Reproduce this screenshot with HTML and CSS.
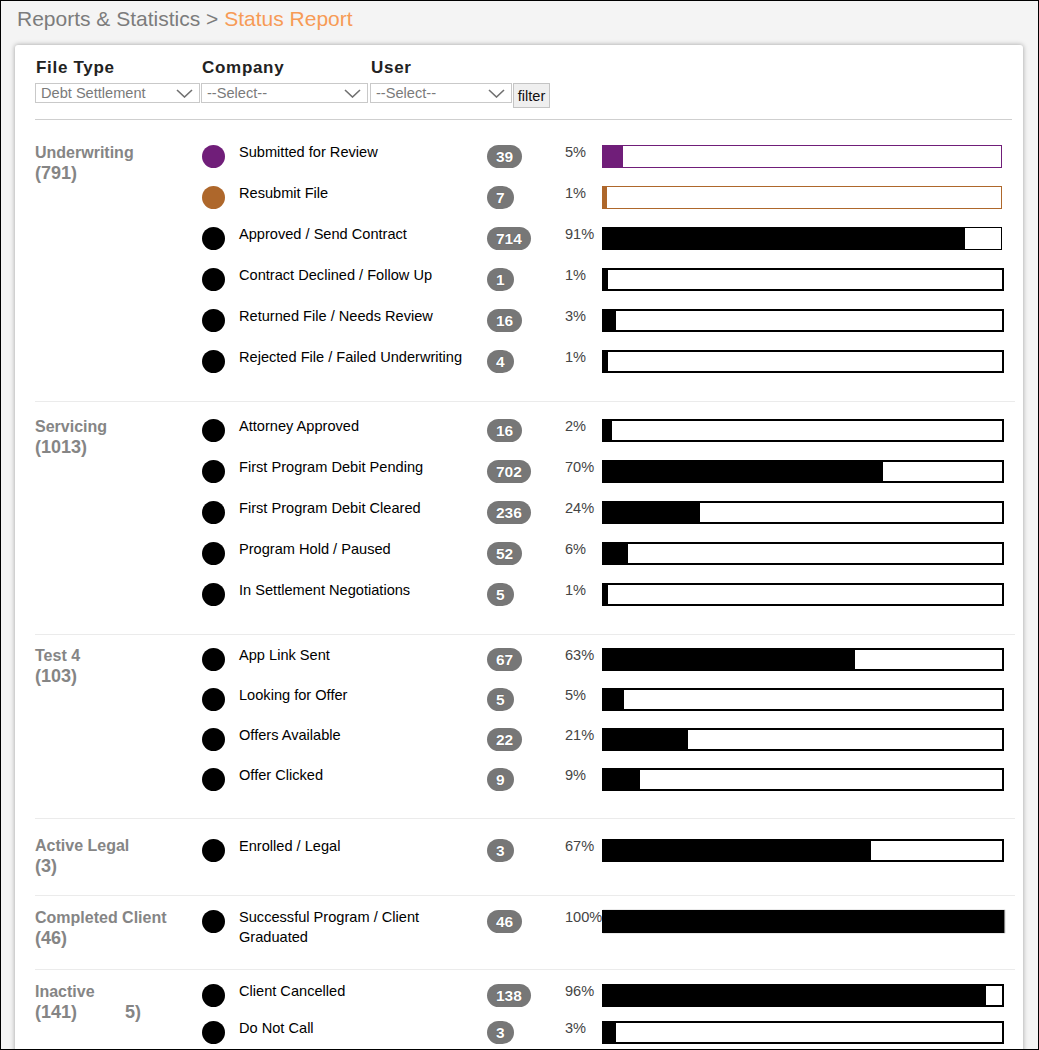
FILE: index.html
```html
<!DOCTYPE html>
<html lang="en">
  <head>
    <meta charset="UTF-8" />
    <title>Status Report</title>
    <link rel="stylesheet" href="styles.css">
  </head>
  <body>
    <div class="crumbs">
      Reports &amp; Statistics &gt; <span class="crumb-current">Status Report</span>
    </div>

    <div class="card">
      <div class="filters">
        <label class="filter-label">File Type</label>
        <label class="filter-label">Company</label>
        <label class="filter-label">User</label>
        <span></span>
        <div class="select">
          <span>Debt Settlement</span>
          <svg class="chevron" width="17" height="9" viewBox="0 0 17 9"><polyline points="1,1 8.5,8 16,1" /></svg>
        </div>
        <div class="select select-company">
          <span>--Select--</span>
          <svg class="chevron" width="17" height="9" viewBox="0 0 17 9"><polyline points="1,1 8.5,8 16,1" /></svg>
        </div>
        <div class="select select-user">
          <span>--Select--</span>
          <svg class="chevron" width="17" height="9" viewBox="0 0 17 9"><polyline points="1,1 8.5,8 16,1" /></svg>
        </div>
        <button class="filter-btn">filter</button>
      </div>

      <!-- Underwriting -->
      <div class="group">
        <div class="group-label">Underwriting<br /><span class="count">(791)</span></div>
        <div class="rows">
          <div class="row">
            <span class="dot dot-purple"></span>
            <span class="row-label">Submitted for Review</span>
            <span class="badge-col"><span class="badge">39</span></span>
            <span class="pct">5%</span>
            <div class="bar bar-purple"><div class="fill" style="width: 5%"></div></div>
          </div>
          <div class="row">
            <span class="dot dot-orange"></span>
            <span class="row-label">Resubmit File</span>
            <span class="badge-col"><span class="badge">7</span></span>
            <span class="pct">1%</span>
            <div class="bar bar-orange"><div class="fill" style="width: 1%"></div></div>
          </div>
          <div class="row">
            <span class="dot"></span>
            <span class="row-label">Approved / Send Contract</span>
            <span class="badge-col"><span class="badge">714</span></span>
            <span class="pct">91%</span>
            <div class="bar bar-thin"><div class="fill" style="width: 91%"></div></div>
          </div>
          <div class="row">
            <span class="dot"></span>
            <span class="row-label">Contract Declined / Follow Up</span>
            <span class="badge-col"><span class="badge">1</span></span>
            <span class="pct">1%</span>
            <div class="bar"><div class="fill" style="width: 1%"></div></div>
          </div>
          <div class="row">
            <span class="dot"></span>
            <span class="row-label">Returned File / Needs Review</span>
            <span class="badge-col"><span class="badge">16</span></span>
            <span class="pct">3%</span>
            <div class="bar"><div class="fill" style="width: 3%"></div></div>
          </div>
          <div class="row">
            <span class="dot"></span>
            <span class="row-label">Rejected File / Failed Underwriting</span>
            <span class="badge-col"><span class="badge">4</span></span>
            <span class="pct">1%</span>
            <div class="bar"><div class="fill" style="width: 1%"></div></div>
          </div>
        </div>
      </div>

      <!-- Servicing -->
      <div class="group group-loose">
        <div class="group-label">Servicing<br /><span class="count">(1013)</span></div>
        <div class="rows">
          <div class="row">
            <span class="dot"></span>
            <span class="row-label">Attorney Approved</span>
            <span class="badge-col"><span class="badge">16</span></span>
            <span class="pct">2%</span>
            <div class="bar"><div class="fill" style="width: 2%"></div></div>
          </div>
          <div class="row">
            <span class="dot"></span>
            <span class="row-label">First Program Debit Pending</span>
            <span class="badge-col"><span class="badge">702</span></span>
            <span class="pct">70%</span>
            <div class="bar"><div class="fill" style="width: 70%"></div></div>
          </div>
          <div class="row">
            <span class="dot"></span>
            <span class="row-label">First Program Debit Cleared</span>
            <span class="badge-col"><span class="badge">236</span></span>
            <span class="pct">24%</span>
            <div class="bar"><div class="fill" style="width: 24%"></div></div>
          </div>
          <div class="row">
            <span class="dot"></span>
            <span class="row-label">Program Hold / Paused</span>
            <span class="badge-col"><span class="badge">52</span></span>
            <span class="pct">6%</span>
            <div class="bar"><div class="fill" style="width: 6%"></div></div>
          </div>
          <div class="row">
            <span class="dot"></span>
            <span class="row-label">In Settlement Negotiations</span>
            <span class="badge-col"><span class="badge">5</span></span>
            <span class="pct">1%</span>
            <div class="bar"><div class="fill" style="width: 1%"></div></div>
          </div>
        </div>
      </div>

      <!-- Test 4 -->
      <div class="group group-tight">
        <div class="group-label">Test 4<br /><span class="count">(103)</span></div>
        <div class="rows">
          <div class="row">
            <span class="dot"></span>
            <span class="row-label">App Link Sent</span>
            <span class="badge-col"><span class="badge">67</span></span>
            <span class="pct">63%</span>
            <div class="bar"><div class="fill" style="width: 63%"></div></div>
          </div>
          <div class="row">
            <span class="dot"></span>
            <span class="row-label">Looking for Offer</span>
            <span class="badge-col"><span class="badge">5</span></span>
            <span class="pct">5%</span>
            <div class="bar"><div class="fill" style="width: 5%"></div></div>
          </div>
          <div class="row">
            <span class="dot"></span>
            <span class="row-label">Offers Available</span>
            <span class="badge-col"><span class="badge">22</span></span>
            <span class="pct">21%</span>
            <div class="bar"><div class="fill" style="width: 21%"></div></div>
          </div>
          <div class="row">
            <span class="dot"></span>
            <span class="row-label">Offer Clicked</span>
            <span class="badge-col"><span class="badge">9</span></span>
            <span class="pct">9%</span>
            <div class="bar"><div class="fill" style="width: 9%"></div></div>
          </div>
        </div>
      </div>

      <!-- Active Legal -->
      <div class="group group-spaced">
        <div class="group-label">Active Legal<br /><span class="count">(3)</span></div>
        <div class="rows">
          <div class="row">
            <span class="dot"></span>
            <span class="row-label">Enrolled / Legal</span>
            <span class="badge-col"><span class="badge">3</span></span>
            <span class="pct">67%</span>
            <div class="bar"><div class="fill" style="width: 67%"></div></div>
          </div>
        </div>
      </div>

      <!-- Completed Client -->
      <div class="group">
        <div class="group-label">Completed Client<br /><span class="count">(46)</span></div>
        <div class="rows">
          <div class="row">
            <span class="dot"></span>
            <span class="row-label">Successful Program / Client Graduated</span>
            <span class="badge-col"><span class="badge">46</span></span>
            <span class="pct">100%</span>
            <div class="bar bar-full"><div class="fill" style="width: 100%"></div></div>
          </div>
        </div>
      </div>

      <!-- Inactive -->
      <div class="group group-inactive">
        <div class="group-label">Inactive<br /><span class="count">(141)</span><span class="count ghost">5)</span></div>
        <div class="rows">
          <div class="row">
            <span class="dot"></span>
            <span class="row-label">Client Cancelled</span>
            <span class="badge-col"><span class="badge">138</span></span>
            <span class="pct">96%</span>
            <div class="bar"><div class="fill" style="width: 96%"></div></div>
          </div>
          <div class="row">
            <span class="dot"></span>
            <span class="row-label">Do Not Call</span>
            <span class="badge-col"><span class="badge">3</span></span>
            <span class="pct">3%</span>
            <div class="bar"><div class="fill" style="width: 3%"></div></div>
          </div>
        </div>
      </div>
    </div>
  </body>
</html>
```

FILE: styles.css
```css
html {
  background: #f4f4f4;
}

body {
  margin: 0;
  height: 1050px;
  box-sizing: border-box;
  border: 1px solid #000;
  overflow: hidden;
  font-family: "Liberation Sans", Arial, sans-serif;
  background: #f4f4f4;
}

.crumbs {
  padding: 6px 0 0 16px;
  font-size: 21px;
  line-height: 24px;
  color: #7c7c7c;
}

.crumb-current {
  color: #f79b56;
}

.card {
  margin: 14px 15px 0 14px;
  padding: 13px 8px 0 20px;
  background: #fff;
  border-radius: 3px;
  box-shadow: 0 0 5px rgba(0, 0, 0, 0.35);
  height: 1100px;
}

/* filter bar */
.filters {
  display: grid;
  grid-template-columns: 166px 169px 142px auto;
  row-gap: 5px;
  align-items: start;
  padding-bottom: 11px;
  margin-right: 3px;
  border-bottom: 1px solid #cfcfcf;
}

.filter-label {
  font-size: 17px;
  line-height: 20px;
  font-weight: bold;
  letter-spacing: 0.7px;
  color: #222;
  padding-left: 1px;
}

.select {
  display: flex;
  align-items: center;
  justify-content: space-between;
  box-sizing: border-box;
  width: 165px;
  height: 20px;
  padding: 0 6px 0 5px;
  border: 1px solid #c9c9c9;
  font-size: 14.6px;
  color: #7a7a7a;
}

.select-company {
  width: 167px;
}

.select-user {
  width: 142px;
}

.chevron polyline {
  fill: none;
  stroke: #707070;
  stroke-width: 1.6;
}

.filter-btn {
  width: 37px;
  height: 25px;
  padding: 0;
  margin-left: 1px;
  background: #efefef;
  border: 1px solid #c4c4c4;
  font-family: "Liberation Sans", Arial, sans-serif;
  font-size: 14.6px;
  color: #111;
}

/* status groups */
.group {
  display: flex;
  padding: 14px 0 10px;
  border-top: 1px solid #ebebeb;
}

.filters + .group {
  border-top: none;
  padding-top: 25px;
}

.group-loose {
  padding-top: 17px;
}

.group-tight {
  padding-top: 13px;
}

.group-spaced {
  padding-top: 19px;
  padding-bottom: 8px;
}

.group-spaced .rows {
  margin-top: 1px;
}

.group-label {
  width: 167px;
  min-height: 51px;
  margin-top: -2px;
  font-size: 16px;
  line-height: 20px;
  font-weight: bold;
  color: #858585;
}

.count {
  font-size: 18px;
}

.ghost {
  margin-left: 48px;
}

.rows {
  display: flex;
  flex-direction: column;
}

.row {
  display: flex;
  align-items: flex-start;
  height: 41px;
}

.group-tight .row {
  height: 40px;
}

.group-inactive .row {
  height: 37px;
}

.dot {
  width: 23px;
  height: 23px;
  border-radius: 50%;
  background: #000;
  margin-right: 14px;
  flex-shrink: 0;
}

.dot-purple {
  background: #701e79;
}

.dot-orange {
  background: #ae672b;
}

.row-label {
  width: 238px;
  margin-right: 10px;
  margin-top: -3px;
  font-size: 14.6px;
  line-height: 20px;
  color: #000;
}

.badge-col {
  width: 78px;
}

.badge {
  display: inline-block;
  height: 23px;
  padding: 0 9px;
  border-radius: 12px;
  background: #777;
  color: #fff;
  font-size: 15.5px;
  font-weight: bold;
  line-height: 23px;
  text-shadow: 0 0 1px rgba(0, 0, 0, 0.4);
}

.pct {
  width: 37px;
  margin-top: -3px;
  font-size: 14.6px;
  line-height: 20px;
  color: #444;
  white-space: nowrap;
}

.bar {
  box-sizing: border-box;
  width: 402px;
  height: 23px;
  border: 2px solid #000;
  background: #fff;
}

.fill {
  height: 100%;
  background: #000;
}

.bar-thin {
  width: 400px;
  border-width: 1px;
}

.bar-purple {
  width: 400px;
  border: 1px solid #701e79;
}

.bar-purple .fill {
  background: #701e79;
}

.bar-orange {
  width: 400px;
  border: 1px solid #ae672b;
}

.bar-orange .fill {
  background: #ae672b;
}

.bar-full {
  box-shadow: 1px 0 1px rgba(0, 0, 0, 0.5);
}
```
